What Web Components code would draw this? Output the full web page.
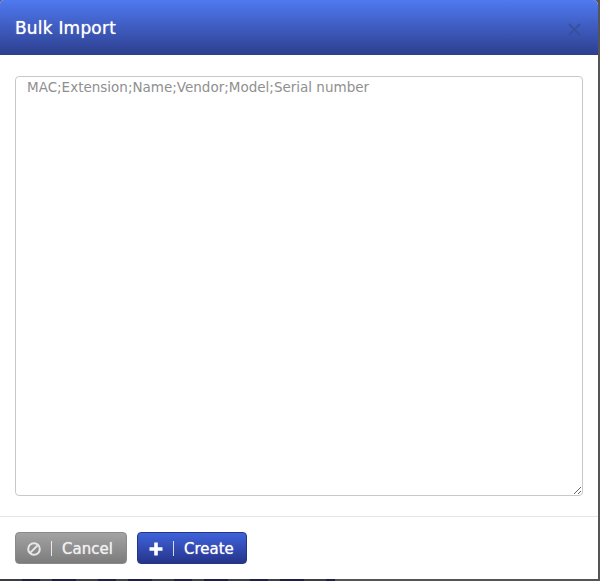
<!DOCTYPE html>
<html>
<head>
<meta charset="utf-8">
<style>
  html, body { margin: 0; height: 100%; background: #555; overflow: hidden; }
  body { font-family: "DejaVu Sans", "Liberation Sans", sans-serif; }
</style>
</head>
<body>
<bulk-dialog>
  <span slot="title">Bulk Import</span>
  <big-note placeholder="MAC;Extension;Name;Vendor;Model;Serial number"></big-note>
  <dialog-button slot="actions" kind="cancel" icon="ban">Cancel</dialog-button>
  <dialog-button slot="actions" kind="create" icon="plus">Create</dialog-button>
</bulk-dialog>
<page-behind></page-behind>
<script>
const dialogTemplate = document.createElement("template");
dialogTemplate.innerHTML = `
<style>
  :host { display: flex; flex-direction: column; width: 598px; height: 579px; background: #fff; border-radius: 4px 5px 0 0; overflow: hidden; box-sizing: border-box; }
  header { display: flex; align-items: center; justify-content: space-between; height: 55px; flex: none; box-sizing: border-box; padding: 0 17px 0 15px; background: linear-gradient(#4f79f0, #2d3f8e); color: #fff; font-size: 17px; letter-spacing: .2px; text-shadow: 0 0 1px rgba(255,255,255,.8); }
  .close { width: 13px; height: 13px; margin-top: 3px; }
  main { flex: 1; display: flex; padding: 21px 15px 20px; min-height: 0; }
  footer { flex: none; height: 63px; box-sizing: border-box; border-top: 1px solid #e5e5e5; display: flex; gap: 10px; padding: 15px 15px 0; }
</style>
<header>
  <slot name="title"></slot>
  <svg class="close" viewBox="0 0 13 13"><path d="M1 1L12 12M12 1L1 12" stroke="#37509f" stroke-width="2" fill="none"/></svg>
</header>
<main><slot></slot></main>
<footer><slot name="actions"></slot></footer>
`;
class BulkDialog extends HTMLElement {
  constructor() {
    super();
    this.attachShadow({ mode: "open" });
    this.shadowRoot.appendChild(dialogTemplate.content.cloneNode(true));
  }
}
customElements.define("bulk-dialog", BulkDialog);

const noteTemplate = document.createElement("template");
noteTemplate.innerHTML = `
<style>
  :host { display: block; flex: 1; min-width: 0; }
  textarea { display: block; width: 100%; height: 100%; box-sizing: border-box; margin: 0; padding: 2px 11px; border: 1px solid #c8c8c8; border-radius: 4px; outline: none; font: 13.5px/16px "DejaVu Sans", "Liberation Sans", sans-serif; color: #555; }
  textarea::placeholder { color: #8f8f8f; opacity: 1; }
</style>
<textarea></textarea>
`;
class BigNote extends HTMLElement {
  constructor() {
    super();
    this.attachShadow({ mode: "open" });
    this.shadowRoot.appendChild(noteTemplate.content.cloneNode(true));
    this.area = this.shadowRoot.querySelector("textarea");
  }
  connectedCallback() {
    this.area.placeholder = this.getAttribute("placeholder") || "";
  }
}
customElements.define("big-note", BigNote);

const ICONS = {
  ban: `<svg viewBox="0 0 14 14"><circle cx="7" cy="7" r="5.8" fill="none" stroke="#e8e8e8" stroke-width="2"/><path d="M3.4 10.6L10.6 3.4" stroke="#e8e8e8" stroke-width="2"/></svg>`,
  plus: `<svg viewBox="0 0 14 14"><path d="M7 .5V13.5M.5 7H13.5" stroke="#fff" stroke-width="3.6"/></svg>`
};
const buttonTemplate = document.createElement("template");
buttonTemplate.innerHTML = `
<style>
  :host { display: inline-flex; align-items: center; height: 32px; box-sizing: border-box; border-radius: 4px; color: #fff; font-size: 15px; padding: 1px 11px 0; text-shadow: 0 0 1px rgba(255,255,255,.8); }
  :host([kind="cancel"]) { width: 112px; background: linear-gradient(#a3a3a3, #7c7c7c); border: 1px solid #8a8a8a; color: #f0f0f0; }
  :host([kind="create"]) { width: 110px; background: linear-gradient(#3f63dc, #25348a); border: 1px solid #26357f; }
  .icon { width: 14px; height: 14px; display: block; }
  .icon svg { display: block; width: 14px; height: 14px; }
  .sep { width: 1px; height: 15px; background: rgba(255,255,255,.8); margin: 0 10px; }
</style>
<span class="icon"></span><span class="sep"></span><slot></slot>
`;
class DialogButton extends HTMLElement {
  constructor() {
    super();
    this.attachShadow({ mode: "open" });
    this.shadowRoot.appendChild(buttonTemplate.content.cloneNode(true));
  }
  connectedCallback() {
    this.shadowRoot.querySelector(".icon").innerHTML = ICONS[this.getAttribute("icon")] || "";
  }
}
customElements.define("dialog-button", DialogButton);

// sliver of the page under the dialog, only 2px shows at the bottom
class PageBehind extends HTMLElement {
  constructor() {
    super();
    this.attachShadow({ mode: "open" });
    this.shadowRoot.innerHTML = `
<style>
  :host { display: block; height: 2px; }
  div { width: 335px; height: 2px; background: repeating-linear-gradient(90deg, #3a3c48 0 22px, #1b2246 22px 40px, #3e4048 40px 52px, #182044 52px 76px); }
</style>
<div></div>`;
  }
}
customElements.define("page-behind", PageBehind);
</script>
</body>
</html>
